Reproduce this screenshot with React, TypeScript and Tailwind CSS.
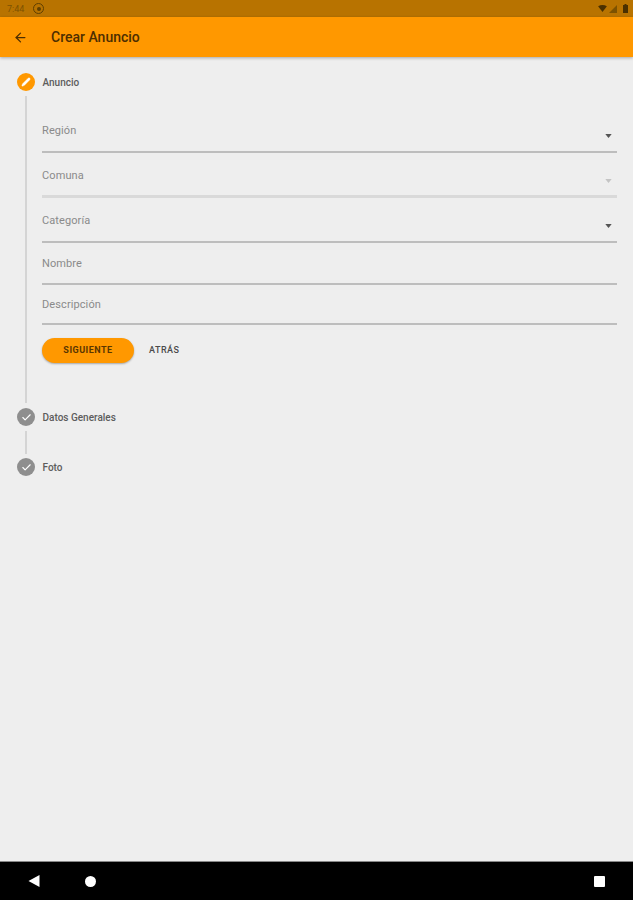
import { ArrowLeft, Check, Pencil } from "lucide-react";

const font = "font-['Roboto','Liberation_Sans',sans-serif]";

function Field({ label, height, labelTop, arrowTop, disabled }: { label: string; height: string; labelTop: string; arrowTop?: string; disabled?: boolean }) {
  return (
    <div className={`${height} ${disabled ? "border-b-[3px] border-[#d9d9d9]" : "border-b-2 border-[#bdbdbd]"} flex justify-between`}>
      <span className={`${labelTop} text-[11px] leading-[14px] tracking-[0.1px] text-[#8a8a8a]`}>{label}</span>
      {arrowTop && (
        <svg viewBox="0 0 8 5" className={`${arrowTop} mr-[5px] h-[4px] w-[7px]`}>
          <path d="M0 0h8L4 5z" fill={disabled ? "#c4c4c4" : "#555555"} />
        </svg>
      )}
    </div>
  );
}

function StepHeader({ label, active }: { label: string; active?: boolean }) {
  return (
    <div className="flex h-[18px] items-center gap-[7.5px] pl-[17px]">
      <div className={`flex h-[18px] w-[18px] items-center justify-center rounded-full ${active ? "bg-[#ff9800]" : "bg-[#8e8e8e]"}`}>
        {active ? <Pencil size={10} fill="#ffffff" stroke="#ffffff" strokeWidth={1} /> : <Check size={11} stroke="#ffffff" strokeWidth={2.5} />}
      </div>
      <span className="mt-[1px] text-[10px] font-medium leading-[12px] text-[#5c5c5c]">{label}</span>
    </div>
  );
}

export default function App() {
  return (
    <div className={`${font} flex h-[900px] w-[633px] flex-col overflow-hidden bg-[#eeeeee]`}>
      {/* status bar */}
      <div className="flex h-[17px] items-center justify-between bg-[#b87300] pl-[7px] pr-[5px]">
        <div className="flex items-center gap-[8px]">
          <span className="text-[9px] leading-[10px] text-[#7d5200]">7:44</span>
          <div className="ml-[1px] flex h-[11px] w-[11px] items-center justify-center rounded-full border border-[#5f3f00]">
            <div className="h-[4px] w-[4px] rounded-full bg-[#5f3f00]" />
          </div>
        </div>
        <div className="flex items-center">
          <svg viewBox="0 0 10 8" className="h-[7px] w-[9px]"><path d="M0 1.5C3-.5 7-.5 10 1.5L5 8z" fill="#4a3000" /></svg>
          <svg viewBox="0 0 8 8" className="ml-[2px] h-[8px] w-[8px]"><path d="M8 0v8H0z" fill="#7d5200" /></svg>
          <svg viewBox="0 0 5 9" className="ml-[6px] h-[9px] w-[5px]"><path d="M1.5 0h2v1H5v8H0V1h1.5z" fill="#4a3000" /></svg>
        </div>
      </div>

      {/* app bar */}
      <div className="z-10 flex h-[40px] items-center bg-[#ff9800] pl-[13px] shadow-[0_1px_3px_rgba(0,0,0,0.3)]">
        <ArrowLeft size={15} stroke="#4d2e00" strokeWidth={2} />
        <span className="ml-[23px] text-[14px] font-medium text-[#4d2e00]">Crear Anuncio</span>
      </div>

      {/* stepper */}
      <div className="flex-1 pt-[16px]">
        <StepHeader label="Anuncio" active />
        <div className="ml-[25px] mt-[5px] h-[307px] border-l-2 border-[#d4d4d4] pl-[15px] pr-[16px]">
          <div className="flex flex-col">
            <Field label="Región" height="h-[57px]" labelTop="mt-[28px]" arrowTop="mt-[38px]" />
            <Field label="Comuna" height="h-[45px]" labelTop="mt-[16px]" arrowTop="mt-[26px]" disabled />
            <Field label="Categoría" height="h-[45px]" labelTop="mt-[16px]" arrowTop="mt-[26px]" />
            <Field label="Nombre" height="h-[42px]" labelTop="mt-[14px]" />
            <Field label="Descripción" height="h-[40px]" labelTop="mt-[13px]" />
          </div>
          <div className="mt-[13px] flex items-center">
            <button className="h-[25px] w-[92px] rounded-full bg-[#ff9800] text-[9px] font-bold tracking-[0.5px] text-[#5a3600] shadow-[0_1px_2px_rgba(0,0,0,0.3)]">SIGUIENTE</button>
            <span className="ml-[15px] text-[9px] font-medium tracking-[0.5px] text-[#4a4a4a]">ATRÁS</span>
          </div>
        </div>
        <div className="mt-[5px]">
          <StepHeader label="Datos Generales" />
        </div>
        <div className="ml-[25px] mb-[4px] mt-[5px] h-[23px] border-l-2 border-[#d4d4d4]" />
        <StepHeader label="Foto" />
      </div>

      {/* nav bar */}
      <div className="flex h-[39px] items-center border-t border-[#888888] bg-black pl-[28px] pr-[28px]">
        <svg viewBox="0 0 11 12" className="h-[12px] w-[12px]"><path d="M11 0v12L0 6z" fill="#ffffff" /></svg>
        <div className="ml-[45px] h-[11px] w-[11px] rounded-full bg-white" />
        <div className="ml-auto h-[11px] w-[11px] rounded-[1px] bg-white" />
      </div>
    </div>
  );
}
